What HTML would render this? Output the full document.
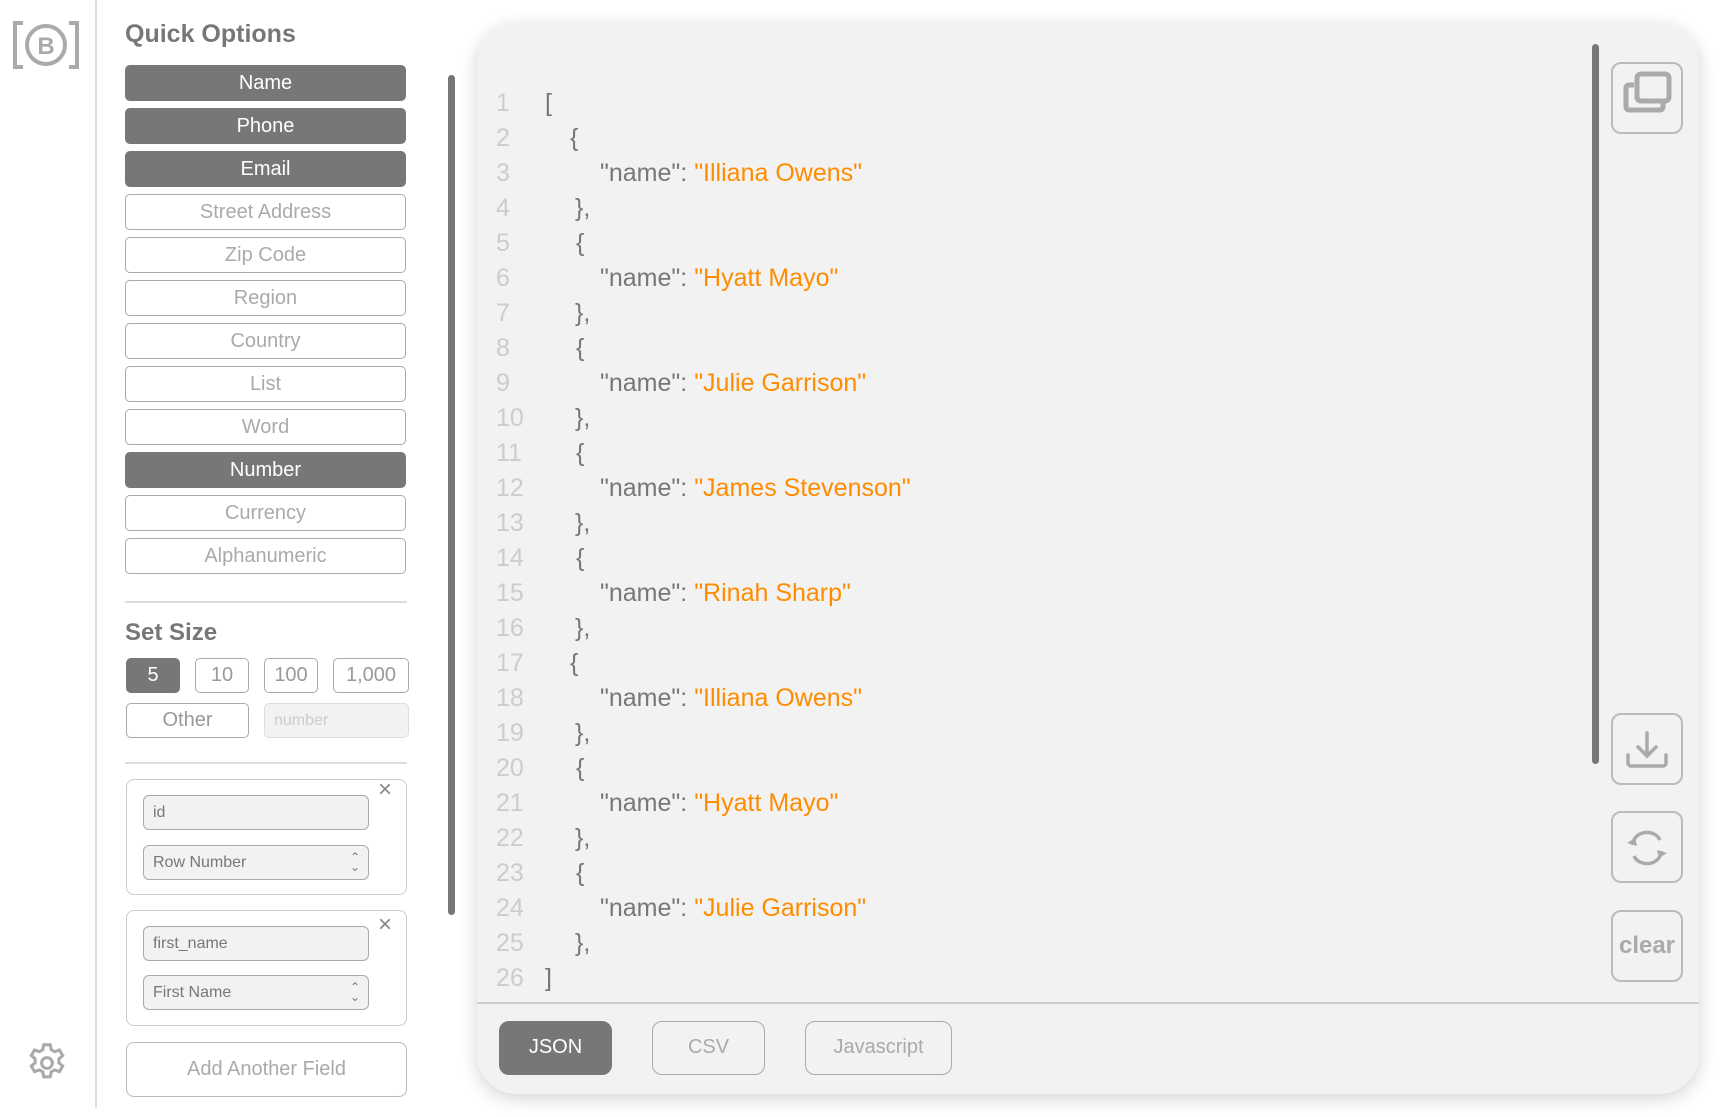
<!DOCTYPE html>
<html><head><meta charset="utf-8"><style>
*{box-sizing:border-box;margin:0;padding:0}
body{width:1728px;height:1117px;background:#fff;font-family:"Liberation Sans",sans-serif;position:relative;overflow:hidden;color:#777}
.a{position:absolute}
.btn{position:absolute;left:125px;width:281px;height:36px;border-radius:5px;border:1.5px solid #aaa;color:#aaa;font-size:20px;text-align:center;line-height:35px;background:#fff}
.on{background:#777;border-color:#777;color:#fff}
.sz{position:absolute;height:35px;border:1.5px solid #aaa;border-radius:5px;text-align:center;line-height:33px;font-size:20px;color:#999}
.card{position:absolute;left:126px;width:281px;border:1px solid #ccc;border-radius:8px}
.inp{position:absolute;left:143px;width:226px;height:35px;border:1px solid #aaa;border-radius:6px;background:#f2f2f2;font-size:16px;color:#777;line-height:33px;padding-left:9px}
.ln{position:absolute;left:496px;color:#ccc;font-size:25px}
.cd{position:absolute;font-size:25px;color:#777;white-space:pre}
.o{color:#ff8c00}
.rb{position:absolute;left:1611px;width:72px;height:72px;border:2px solid #bbb;border-radius:10px}
.fb{position:absolute;top:1021px;height:54px;border:1.5px solid #aaa;border-radius:10px;color:#aaa;font-size:20px;text-align:center;line-height:51px}
</style></head><body>
<svg class="a" style="left:12px;top:20px" width="68" height="50" viewBox="0 0 68 50"><path d="M11 3H3V47H11M57 3H65V47H57" fill="none" stroke="#aaa" stroke-width="4"/><circle cx="34" cy="25" r="19" fill="none" stroke="#aaa" stroke-width="4"/><text x="34" y="34" font-size="24" font-weight="bold" fill="#aaa" text-anchor="middle" font-family="Liberation Sans">B</text></svg>
<div class="a" style="left:95px;top:0;width:2px;height:1108px;background:#ddd"></div>
<svg class="a" style="left:24px;top:1040px" width="46" height="46" viewBox="0 0 24 24"><path fill="none" stroke="#aaa" stroke-width="1.6" d="M10.3 2.5h3.4l.5 2.6 1.8 1 2.5-.9 1.7 2.9-2 1.7v2.1l2 1.7-1.7 2.9-2.5-.9-1.8 1-.5 2.6h-3.4l-.5-2.6-1.8-1-2.5.9-1.7-2.9 2-1.7v-2.1l-2-1.7 1.7-2.9 2.5.9 1.8-1z"/><circle cx="12" cy="12" r="2.8" fill="none" stroke="#aaa" stroke-width="1.6"/></svg>

<div class="a" style="left:125px;top:20px;font-size:25px;font-weight:bold;color:#777">Quick Options</div>
<div class="btn on" style="top:65px">Name</div>
<div class="btn on" style="top:108px">Phone</div>
<div class="btn on" style="top:151px">Email</div>
<div class="btn" style="top:194px">Street Address</div>
<div class="btn" style="top:237px">Zip Code</div>
<div class="btn" style="top:280px">Region</div>
<div class="btn" style="top:323px">Country</div>
<div class="btn" style="top:366px">List</div>
<div class="btn" style="top:409px">Word</div>
<div class="btn on" style="top:452px">Number</div>
<div class="btn" style="top:495px">Currency</div>
<div class="btn" style="top:538px">Alphanumeric</div>
<div class="a" style="left:125px;top:601px;width:282px;height:2px;background:#ddd"></div>
<div class="a" style="left:125px;top:619px;font-size:24px;font-weight:bold;color:#777">Set Size</div>
<div class="sz on" style="left:126px;top:658px;width:54px;color:#fff;background:#777;border-color:#777">5</div>
<div class="sz" style="left:195px;top:658px;width:54px">10</div>
<div class="sz" style="left:264px;top:658px;width:54px">100</div>
<div class="sz" style="left:333px;top:658px;width:76px">1,000</div>
<div class="sz" style="left:126px;top:703px;width:123px">Other</div>
<div class="sz" style="left:264px;top:703px;width:145px;background:#f2f2f2;border-color:#ddd;color:#ccc;font-size:16px;text-align:left;padding-left:9px">number</div>
<div class="a" style="left:125px;top:762px;width:282px;height:2px;background:#ddd"></div>
<div class="card" style="top:779px;height:116px"></div>
<div class="inp" style="top:795px">id</div>
<div class="inp" style="top:845px">Row Number<span style="position:absolute;right:8px;font-size:12px;line-height:10px;top:6px">&#8963;<br>&#8964;</span></div>
<div class="a" style="left:378px;top:776px;font-size:24px;color:#888">&#215;</div>
<div class="card" style="top:910px;height:116px"></div>
<div class="inp" style="top:926px">first_name</div>
<div class="inp" style="top:975px">First Name<span style="position:absolute;right:8px;font-size:12px;line-height:10px;top:6px">&#8963;<br>&#8964;</span></div>
<div class="a" style="left:378px;top:911px;font-size:24px;color:#888">&#215;</div>
<div class="card" style="top:1042px;height:55px;border-color:#bbb;text-align:center;line-height:53px;font-size:20px;color:#aaa">Add Another Field</div>
<div class="a" style="left:448px;top:75px;width:7px;height:840px;border-radius:4px;background:#777"></div>

<div class="a" style="left:477px;top:24px;width:1222px;height:1070px;border-radius:40px;background:#f2f2f2;box-shadow:0 4px 18px rgba(0,0,0,.18)"></div>
<div class="a" style="left:477px;top:1002px;width:1222px;height:1.5px;background:#ccc"></div>
<div class="a" style="left:1592px;top:44px;width:7px;height:720px;border-radius:4px;background:#777"></div>

<div id="code"></div>
<script>
var L=[["[",545],["{",570],["N","Illiana Owens"],["},",575],["{",576],["N","Hyatt Mayo"],["},",575],["{",576],["N","Julie Garrison"],["},",575],["{",576],["N","James Stevenson"],["},",575],["{",576],["N","Rinah Sharp"],["},",575],["{",570],["N","Illiana Owens"],["},",575],["{",576],["N","Hyatt Mayo"],["},",575],["{",576],["N","Julie Garrison"],["},",575],["]",545]];
var h="";L.forEach(function(l,i){var t=89+i*35;h+='<div class="ln" style="top:'+t+'px">'+(i+1)+'</div>';
if(l[0]=="N")h+='<div class="cd" style="top:'+t+'px;left:600px">"name": <span class="o">"'+l[1]+'"</span></div>';
else h+='<div class="cd" style="top:'+t+'px;left:'+l[1]+'px">'+l[0]+'</div>';});
document.getElementById("code").innerHTML=h;
</script>

<div class="fb" style="left:499px;width:113px;background:#777;border-color:#777;color:#fff">JSON</div>
<div class="fb" style="left:652px;width:113px">CSV</div>
<div class="fb" style="left:805px;width:147px">Javascript</div>

<div class="rb" style="top:62px"><svg width="68" height="68" viewBox="0 0 68 68"><rect x="24" y="10" width="32" height="27" rx="4" fill="none" stroke="#aaa" stroke-width="5"/><path d="M21 21h-5a3 3 0 0 0-3 3v19a3 3 0 0 0 3 3h31a3 3 0 0 0 3-3v-4" fill="none" stroke="#aaa" stroke-width="5"/></svg></div>
<div class="rb" style="top:713px"><svg width="68" height="68" viewBox="0 0 68 68"><path d="M34 18v22M25 32l9 9 9-9M15 40v8a3 3 0 0 0 3 3h32a3 3 0 0 0 3-3v-8" fill="none" stroke="#aaa" stroke-width="3.5" stroke-linecap="round"/></svg></div>
<div class="rb" style="top:811px"><svg width="68" height="68" viewBox="0 0 68 68"><path d="M20 32a14 12 0 0 1 27-5M48 38a14 12 0 0 1-27 5" fill="none" stroke="#aaa" stroke-width="3.5"/><path d="M14 30l8-5 2 8zM54 40l-8 5-2-8z" fill="#aaa"/></svg></div>
<div class="rb" style="top:910px;text-align:center;line-height:68px;font-size:24px;font-weight:bold;color:#aaa">clear</div>
</body></html>
